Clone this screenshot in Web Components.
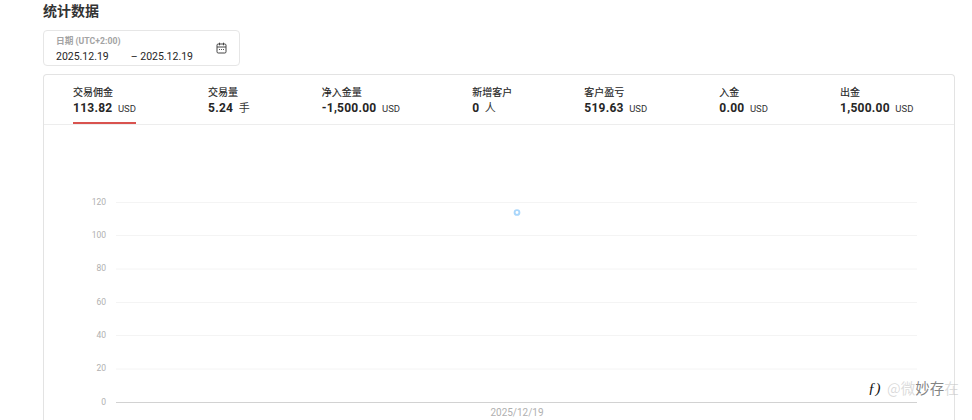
<!DOCTYPE html>
<html lang="zh"><head><meta charset="utf-8">
<style>
html,body{margin:0;padding:0;background:#fff;overflow:hidden;height:420px}
body{font-family:Roboto,"Noto Sans CJK SC",sans-serif;color:#262626}
</style></head><body>
<stats-page></stats-page>
<template id="t-stat">
<style>
:host{display:flex;flex-direction:column;height:49px;box-sizing:border-box;padding-top:10.5px;position:relative;flex:none}
.l{font-size:10px;line-height:12px;color:#262626;font-family:"Noto Sans CJK SC",sans-serif;white-space:nowrap;-webkit-text-stroke:.15px #262626}
.v{display:flex;align-items:baseline;margin-top:3px;white-space:nowrap;line-height:15px}
b{font-size:12px;font-weight:700;color:#262626;letter-spacing:.25px}
span{font-size:9.5px;margin-left:5.5px;color:#333;font-family:Roboto,"Noto Sans CJK SC",sans-serif}
:host([cjk]) span{font-size:11px}
:host([active])::after{content:"";position:absolute;left:0;right:0;bottom:0;height:2px;background:#d9534f}
</style>
<div class="l"><slot name="label"></slot></div>
<div class="v"><b><slot name="value"></slot></b><span><slot name="unit"></slot></span></div>
</template>
<script>
function tpl(id){return document.getElementById(id).content.cloneNode(true)}
class StatItem extends HTMLElement{constructor(){super();this.attachShadow({mode:'open'}).appendChild(tpl('t-stat'))}}
customElements.define('stat-item',StatItem);

class DateRange extends HTMLElement{constructor(){super();this.attachShadow({mode:'open'}).innerHTML=`
<style>
:host{display:flex;align-items:center;justify-content:space-between;box-sizing:border-box;width:197px;height:36px;margin-left:43px;border:1px solid #e6e6e6;border-radius:4px;padding:3px 12px 0 12px;font-family:Roboto,"Noto Sans CJK SC",sans-serif}
.cap{font-size:8.7px;line-height:11px;color:#a3a3a3;font-weight:700;white-space:nowrap}
.d{display:flex;font-size:10.5px;line-height:14px;color:#262626;margin-top:3px;white-space:nowrap}
.d i{font-style:normal;margin-left:22px}
svg{display:block;margin-top:-3px}
</style>
<div><div class="cap">日期 (UTC+2:00)</div><div class="d"><span>2025.12.19</span><i>– 2025.12.19</i></div></div>
<svg width="11" height="12" viewBox="0 0 11 12" fill="none" stroke="#444" stroke-width="1"><rect x="1" y="2" width="9" height="9" rx="1.2"/><path d="M1 5h9M3.5 .7v2.6M7.5 .7v2.6"/><path d="M3 7.5h1M5 7.5h1M7 7.5h1" stroke-width=".9"/></svg>`}}
customElements.define('date-range',DateRange);

class StatChart extends HTMLElement{constructor(){super();
const lines=[[120,202.5],[100,235.5],[80,269],[60,302.5],[40,335.5],[20,369]];
const y0=-125;
let s='';
for(const[v,y]of lines){s+=`<line x1="72" x2="873" y1="${y+y0}" y2="${y+y0}" stroke="#f4f4f4"/><text x="62" y="${y+y0+2}" text-anchor="end">${v}</text>`}
s+=`<line x1="72" x2="873" y1="277.5" y2="277.5" stroke="#d2d2d2"/><text x="62" y="279.5" text-anchor="end">0</text>`;
s+=`<text class="x" x="473" y="291" text-anchor="middle">2025/12/19</text>`;
s+=`<circle cx="473" cy="87.5" r="2.4" fill="#fff" stroke="#a9d6fb" stroke-width="1.9"/>`;
this.attachShadow({mode:'open'}).innerHTML=`<style>:host{display:block;height:296px}svg{display:block}text{font:8.5px Roboto,sans-serif;fill:#b0b0b0}text.x{font-size:10px}</style><svg width="910" height="296" viewBox="0 0 910 296">${s}</svg>`}}
customElements.define('stat-chart',StatChart);

class StatsCard extends HTMLElement{constructor(){super();this.attachShadow({mode:'open'}).innerHTML=`
<style>
:host{display:block;box-sizing:border-box;width:912px;height:360px;margin:8px 0 0 43px;border:1px solid #e3e3e3;border-bottom:0;border-radius:4px 4px 0 0}
.tabs{display:flex;gap:72.1px;padding-left:29px;height:49px;border-bottom:1px solid #ededed}
</style>
<div class="tabs"><slot name="stat"></slot></div><slot></slot>`}}
customElements.define('stats-card',StatsCard);

class WaterMark extends HTMLElement{constructor(){super();this.attachShadow({mode:'open'}).innerHTML=`
<style>
:host{position:absolute;left:868px;top:378px;display:flex;align-items:center;font-family:"Noto Sans CJK SC",sans-serif;font-size:14.5px;line-height:20px;white-space:nowrap}
.f{font:italic 400 15px "Liberation Serif",serif;color:#111;width:16px;margin-right:3px}
.a{color:rgba(150,150,150,.35)}
.w{color:rgba(190,190,190,.55)}
.m{color:rgba(60,60,60,.65)}
</style>
<span class="f">ƒ)</span><span class="a">@</span><span class="w">微</span><span class="m">妙存</span><span class="w">在</span>`}}
customElements.define('water-mark',WaterMark);

class StatsPage extends HTMLElement{constructor(){super();
const items=[['交易佣金','113.82','USD',1],['交易量','5.24','手'],['净入金量','-1,500.00','USD'],['新增客户','0','人'],['客户盈亏','519.63','USD'],['入金','0.00','USD'],['出金','1,500.00','USD']];
const h=items.map(([l,v,u,a])=>`<stat-item slot="stat"${a?' active':''}${u==='USD'?'':' cjk'}><span slot="label">${l}</span><span slot="value">${v}</span><span slot="unit">${u}</span></stat-item>`).join('');
this.attachShadow({mode:'open'}).innerHTML=`
<style>
:host{display:block;width:972px;height:420px;overflow:hidden;position:relative}
h1{margin:0 0 10px 43px;font:700 14px/20px "Noto Sans CJK SC",sans-serif;color:#333;height:20px}
</style>
<h1>统计数据</h1>
<date-range></date-range>
<stats-card>${h}<stat-chart></stat-chart></stats-card>
<water-mark></water-mark>`}}
customElements.define('stats-page',StatsPage);
</script>
</body></html>
